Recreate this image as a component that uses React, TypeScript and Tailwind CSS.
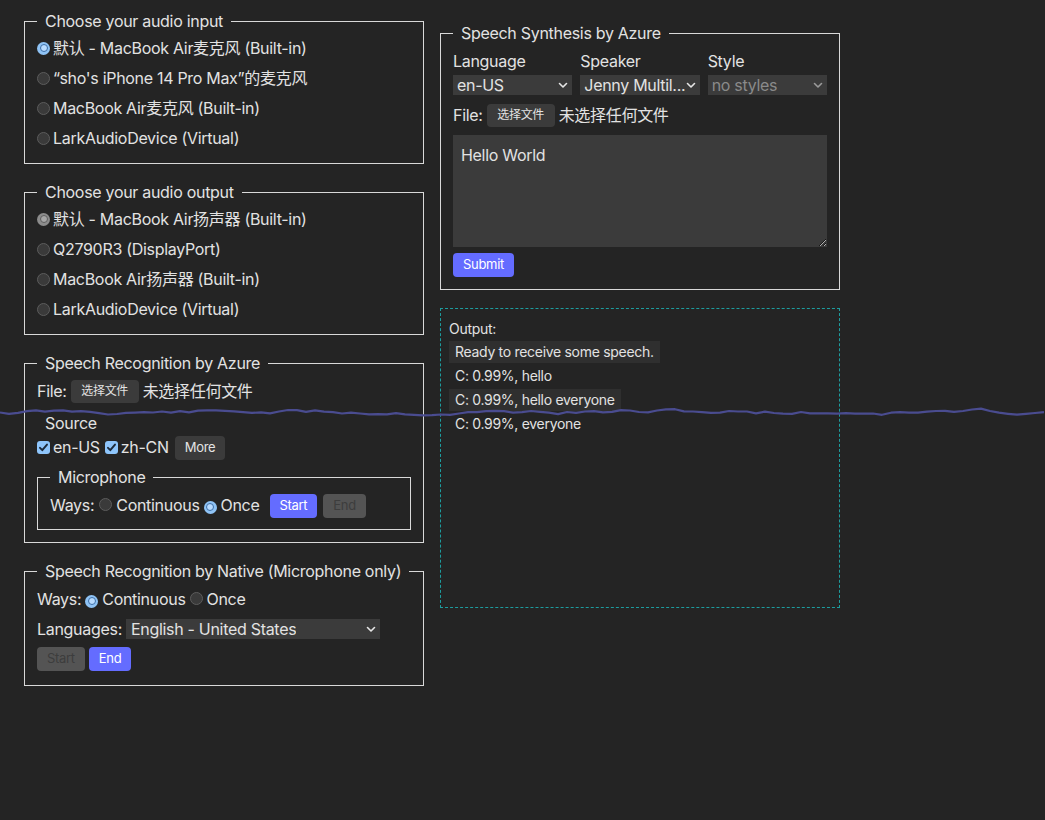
import React from 'react';

const FONT = { fontFamily: 'Inter, "Noto Sans CJK SC", sans-serif' };

function Radio({ checked = false, tone = 'blue' }: { checked?: boolean; tone?: 'blue' | 'gray' }) {
  if (!checked) {
    return <span className="inline-block w-[13px] h-[13px] rounded-full bg-[#3a3a3a] border border-[#5c5c5c] shrink-0" />;
  }
  const outer = tone === 'blue' ? 'bg-[#8fc3f5]' : 'bg-[#8c8c8c]';
  const inner = tone === 'blue' ? 'bg-[#b8dbff] border-[#3d6fa8]' : 'bg-[#a6a6a6] border-[#5e5e5e]';
  return (
    <span className={`inline-flex items-center justify-center w-[13px] h-[13px] rounded-full shrink-0 ${outer}`}>
      <span className={`block w-[8px] h-[8px] rounded-full border ${inner}`} />
    </span>
  );
}

function Checkbox() {
  return (
    <span className="inline-flex items-center justify-center w-[13px] h-[13px] rounded-[3px] bg-[#8ec5fb] shrink-0">
      <svg width="11" height="11" viewBox="0 0 11 11">
        <path d="M2 5.8 L4.3 8.2 L9 2.6" fill="none" stroke="#1c2a3a" strokeWidth="1.9" strokeLinecap="round" strokeLinejoin="round" />
      </svg>
    </span>
  );
}

function Chevron({ dim = false }: { dim?: boolean }) {
  return (
    <svg width="10" height="7" viewBox="0 0 10 7" className="shrink-0">
      <path d="M1.5 1.5 L5 5 L8.5 1.5" fill="none" stroke={dim ? '#9a9a9a' : '#e6e6e6'} strokeWidth="1.6" strokeLinecap="round" strokeLinejoin="round" />
    </svg>
  );
}

function FakeSelect({ value, dim = false, className = '' }: { value: string; dim?: boolean; className?: string }) {
  return (
    <div className={`h-5 bg-[#3b3b3b] flex items-center justify-between pl-1 pr-[4px] leading-5 ${className}`}>
      <span className={`whitespace-nowrap overflow-hidden ${dim ? 'text-[#8a8a8a]' : ''}`}>{value}</span>
      <Chevron dim={dim} />
    </div>
  );
}

function Btn({ children, kind = 'gray' }: { children: React.ReactNode; kind?: 'gray' | 'blue' | 'off' }) {
  const look =
    kind === 'blue'
      ? 'bg-[#646cff] text-white'
      : kind === 'off'
      ? 'bg-[#545454] text-[#3d3d3d]'
      : 'bg-[#3b3b3b] text-[#e4e4e4]';
  return <span className={`inline-flex items-center justify-center h-6 px-[10px] rounded-[4px] text-[13px] ${look}`}>{children}</span>;
}

function FileRow() {
  return (
    <div className="flex items-center h-6">
      <span>File:</span>
      <span className="ml-1 inline-flex items-center justify-center h-[23px] w-[68px] rounded-[4px] bg-[#3b3b3b] text-[12px]">选择文件</span>
      <span className="ml-1">未选择任何文件</span>
    </div>
  );
}

function Box({ title, children, className = '' }: { title: string; children: React.ReactNode; className?: string }) {
  return (
    <fieldset className={`border border-[#d9d9d9] px-3 pb-[10px] ${className}`}>
      <legend className="px-2 leading-6 whitespace-nowrap">{title}</legend>
      {children}
    </fieldset>
  );
}

function Wave() {
  // deterministic noise for the level meter line
  let seed = 11;
  const rand = () => {
    seed = (seed * 9301 + 49297) % 233280;
    return seed / 233280;
  };
  const pts: string[] = [];
  let y = 10;
  for (let x = 0; x <= 1045; x += 9) {
    y = y + (rand() - 0.5) * 4.5;
    y = Math.max(6, Math.min(14, y * 0.8 + 10 * 0.2));
    pts.push(`${x},${y.toFixed(1)}`);
  }
  return (
    <svg className="absolute left-0 top-[402px] w-full h-5 pointer-events-none" viewBox="0 0 1045 20" preserveAspectRatio="none">
      <polyline points={pts.join(' ')} fill="none" stroke="#4a4c90" strokeWidth="2.2" strokeLinejoin="round" />
    </svg>
  );
}

export default function App() {
  const inputs = ['默认 - MacBook Air麦克风 (Built-in)', '“sho\'s iPhone 14 Pro Max”的麦克风', 'MacBook Air麦克风 (Built-in)', 'LarkAudioDevice (Virtual)'];
  const outputs = ['默认 - MacBook Air扬声器 (Built-in)', 'Q2790R3 (DisplayPort)', 'MacBook Air扬声器 (Built-in)', 'LarkAudioDevice (Virtual)'];
  const results = ['Ready to receive some speech.', 'C: 0.99%, hello', 'C: 0.99%, hello everyone', 'C: 0.99%, everyone'];

  return (
    <div className="relative min-h-screen bg-[#242424] text-[#e2e2e2] text-base tracking-[-0.3px]" style={FONT}>
      <div className="flex gap-4 px-6 pt-[9px]">
        {/* left column */}
        <div className="w-[400px] flex flex-col gap-4">
          <Box title="Choose your audio input">
            {inputs.map((t, i) => (
              <div key={t} className="h-[30px] flex items-center">
                <Radio checked={i === 0} />
                <span className="ml-[3px]">{t}</span>
              </div>
            ))}
          </Box>

          <Box title="Choose your audio output">
            {outputs.map((t, i) => (
              <div key={t} className="h-[30px] flex items-center">
                <Radio checked={i === 0} tone="gray" />
                <span className="ml-[3px]">{t}</span>
              </div>
            ))}
          </Box>

          <Box title="Speech Recognition by Azure" className="pb-[12px]">
            <div className="mt-1">
              <FileRow />
            </div>
            <fieldset className="mt-2">
              <legend className="px-2 leading-6">Source</legend>
              <div className="flex items-center h-6">
                <Checkbox />
                <span className="ml-[3px]">en-US</span>
                <span className="ml-[5px]"><Checkbox /></span>
                <span className="ml-[3px]">zh-CN</span>
                <span className="ml-[6px]"><Btn>More</Btn></span>
              </div>
              <fieldset className="mt-[6px] border border-[#d9d9d9] px-3 pb-[12px]">
                <legend className="px-2 leading-6">Microphone</legend>
                <div className="mt-1 flex items-center h-6">
                  <span>Ways:</span>
                  <span className="ml-[5px]"><Radio /></span>
                  <span className="ml-1">Continuous</span>
                  <span className="ml-[4px]"><Radio checked /></span>
                  <span className="ml-1">Once</span>
                  <span className="ml-[10px]"><Btn kind="blue">Start</Btn></span>
                  <span className="ml-[6px]"><Btn kind="off">End</Btn></span>
                </div>
              </fieldset>
            </fieldset>
          </Box>

          <Box title="Speech Recognition by Native (Microphone only)" className="pb-[14px]">
            <div className="mt-[4px] flex items-center h-6">
              <span>Ways:</span>
              <span className="ml-1"><Radio checked /></span>
              <span className="ml-1">Continuous</span>
              <span className="ml-1"><Radio /></span>
              <span className="ml-1">Once</span>
            </div>
            <div className="mt-[6px] flex items-center h-6">
              <span>Languages:</span>
              <FakeSelect value="English - United States" className="ml-1 w-[254px] pl-[5px]" />
            </div>
            <div className="mt-[6px] flex items-center gap-1">
              <Btn kind="off">Start</Btn>
              <Btn kind="blue">End</Btn>
            </div>
          </Box>
        </div>

        {/* right column */}
        <div className="w-[400px] pt-3">
          <Box title="Speech Synthesis by Azure" className="pb-[12px]">
            <div className="grid grid-cols-3 gap-x-2 mt-1">
              <span className="leading-6">Language</span>
              <span className="leading-6">Speaker</span>
              <span className="leading-6">Style</span>
              <FakeSelect value="en-US" className="mt-[2px]" />
              <FakeSelect value="Jenny Multil..." className="mt-[2px]" />
              <FakeSelect value="no styles" dim className="mt-[2px]" />
            </div>
            <div className="mt-2">
              <FileRow />
            </div>
            <textarea
              className="mt-2 block w-full h-[112px] bg-[#3b3b3b] px-2 py-2 leading-6 text-[#e2e2e2] outline-none border-0"
              defaultValue="Hello World"
            />
            <div className="mt-[4px]">
              <Btn kind="blue">Submit</Btn>
            </div>
          </Box>

          <div className="mt-[18px] h-[300px] border border-dashed border-[#1d9c9e] px-2 pt-[8px] text-sm">
            <div className="leading-[23px]">Output:</div>
            {results.map((r, i) => (
              <div key={r} className="h-6">
                <span className={`inline-block mt-[1px] px-[6px] leading-[22px] ${i % 2 === 0 ? 'bg-[#2f2f2f]' : ''}`}>{r}</span>
              </div>
            ))}
          </div>
        </div>
      </div>
      <Wave />
    </div>
  );
}
